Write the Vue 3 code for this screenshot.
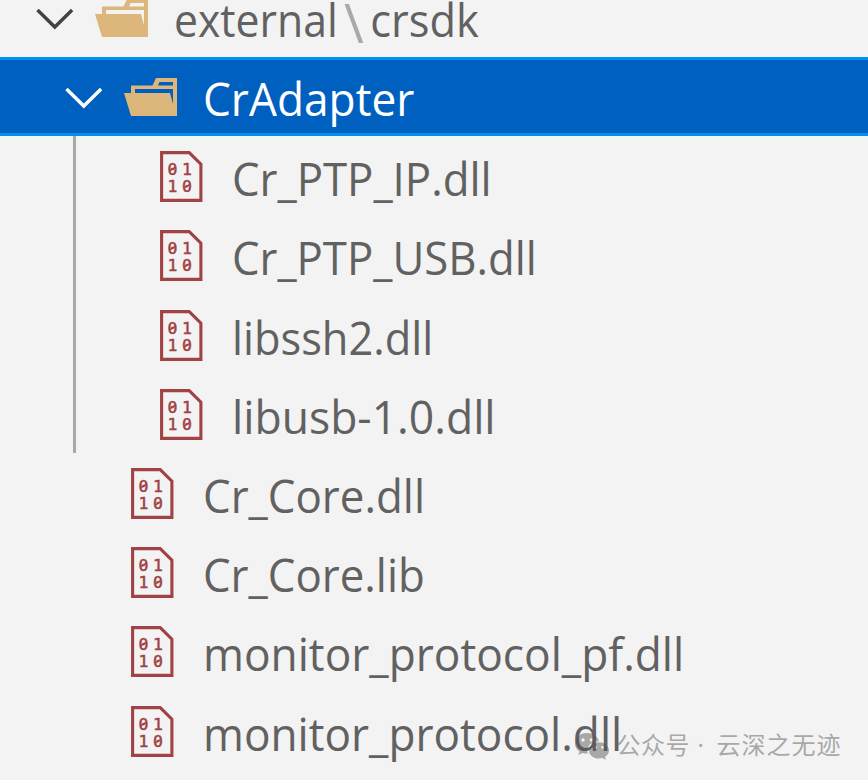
<script setup>
import { ref } from 'vue'

// width: 文件名的排版宽度
const adapterFiles = [
  { name: 'Cr_PTP_IP.dll', width: 259.6 },
  { name: 'Cr_PTP_USB.dll', width: 304.8 },
  { name: 'libssh2.dll', width: 201.2 },
  { name: 'libusb-1.0.dll', width: 263.6 }
]

const sdkFiles = [
  { name: 'Cr_Core.dll', width: 222 },
  { name: 'Cr_Core.lib', width: 221.8 },
  { name: 'monitor_protocol_pf.dll', width: 481.2 },
  { name: 'monitor_protocol.dll', width: 419.2 }
]

const adapterOpen = ref(true)
</script>

<template>
  <div class="explorer">
    <svg class="symbols" width="0" height="0">
      <symbol id="chevron" viewBox="0 0 38 79">
        <path d="M1.5 32 18.8 49 36.1 32" fill="none" stroke="currentColor" stroke-width="3.4" />
      </symbol>
      <symbol id="folder" viewBox="0 0 54 79">
        <path
          fill="#dcb67a"
          fill-rule="evenodd"
          d="M7 28.5H28.5L32 21H53V59H7L0 36H7ZM35.5 25 34 28.5H49V25ZM11 32V36H46L49 47V32Z"
        />
      </symbol>
      <symbol id="binary" viewBox="0 0 44 79">
        <path d="M1.6 16.6H29.2L40.9 28.1V64.4H1.6Z" fill="none" stroke="#a04246" stroke-width="3.1" />
        <text class="bits" x="7.6" y="39.1">01</text>
        <text class="bits" x="7.6" y="56.4">10</text>
        <path d="M10.2 34.6 15.3 31.2M24.5 51.9 29.6 48.5" stroke="#a04246" stroke-width="1.5" />
      </symbol>
    </svg>

    <div class="row root-row">
      <svg class="chevron"><use href="#chevron" /></svg>
      <svg class="folder"><use href="#folder" /></svg>
      <svg class="label" width="320">
        <text y="59.2" textLength="163.8" lengthAdjust="spacingAndGlyphs">external</text>
        <text class="separator" x="170" y="65">\</text>
        <text x="196.2" y="59.2" textLength="108.6" lengthAdjust="spacingAndGlyphs">crsdk</text>
      </svg>
    </div>

    <div class="row selected" @click="adapterOpen = !adapterOpen">
      <svg class="chevron"><use href="#chevron" /></svg>
      <svg class="folder"><use href="#folder" /></svg>
      <svg class="label" width="212">
        <text y="59.2" textLength="211.4" lengthAdjust="spacingAndGlyphs">CrAdapter</text>
      </svg>
    </div>

    <div v-if="adapterOpen" class="children">
      <div v-for="file in adapterFiles" :key="file.name" class="row file-row">
        <svg class="binary"><use href="#binary" /></svg>
        <svg class="label" :width="file.width">
          <text y="59.5" :textLength="file.width" lengthAdjust="spacingAndGlyphs">{{ file.name }}</text>
        </svg>
      </div>
    </div>

    <div class="siblings">
      <div v-for="file in sdkFiles" :key="file.name" class="row file-row">
        <svg class="binary"><use href="#binary" /></svg>
        <svg class="label" :width="file.width">
          <text y="59.5" :textLength="file.width" lengthAdjust="spacingAndGlyphs">{{ file.name }}</text>
        </svg>
      </div>
    </div>

    <div class="watermark">
      <svg class="wechat" viewBox="0 0 35 28">
        <path
          fill-rule="evenodd"
          d="M12 0C5 0 0 4.8 0 10.4c0 3.4 1.8 6.2 4.6 8.1L3.3 22l4.5-2.1c1.3.4 2.7.6 4.2.6h.8C10.7 14 16 8 24 8.2 22.8 3.5 18 0 12 0ZM8 5.3a1.7 1.7 0 1 0 .01 0ZM16.3 5.3a1.7 1.7 0 1 0 .01 0Z"
        />
        <path
          fill-rule="evenodd"
          d="M24 9.2c-5.6 0-10 3.7-10 8.2s4.4 8.2 10 8.2c1.2 0 2.4-.2 3.5-.5l3.3 1.9-.9-3.2c2.5-1.5 4.1-3.8 4.1-6.4 0-4.5-4.4-8.2-10-8.2ZM20.6 13a1.4 1.4 0 1 0 .01 0ZM27.5 13a1.4 1.4 0 1 0 .01 0Z"
        />
      </svg>
      <svg class="watermark-text">
        <text x="-1.5" y="26" textLength="73">公众号</text>
        <text class="dot" x="79.5" y="26">·</text>
        <text x="98.5" y="26" textLength="124">云深之无迹</text>
      </svg>
    </div>
  </div>
</template>

<style>
body {
  background: #f3f3f3;
}
</style>

<style scoped>
.explorer {
  position: relative;
  height: 780px;
  overflow: hidden;
  background: #f3f3f3;
  color: #616161;
}
.symbols {
  display: block;
}
.row {
  display: flex;
  box-sizing: border-box;
  height: 79.2px;
}
.row svg {
  flex: none;
  height: 79px;
}
.root-row {
  margin-top: -22.2px;
  padding-left: 35.5px;
}
.root-row .chevron {
  color: #424242;
}
.selected {
  padding-left: 64.5px;
  background: #0060c0;
  box-shadow: inset 0 3px #0090f1, inset 0 -3px #0090f1;
  color: #fff;
  cursor: pointer;
}
.chevron {
  width: 38px;
  margin-right: 21.5px;
}
.folder {
  width: 54px;
  margin-right: 24.8px;
}
.binary {
  width: 44px;
  margin-right: 27.8px;
}
.children {
  margin-left: 73px;
  padding-left: 84px;
  border-left: 3px solid #a9a9a9;
}
.siblings {
  padding-left: 131px;
}
.row .label {
  overflow: visible;
  fill: currentColor;
  font-family: "Open Sans", "Noto Sans", sans-serif;
  font-size: 46px;
}
.separator {
  fill: #a9a9a9;
  font-size: 54px;
}
.bits {
  fill: #a04246;
  stroke: #a04246;
  stroke-width: 0.5px;
  font-family: "DejaVu Sans Mono", monospace;
  font-size: 16.5px;
  letter-spacing: 4.4px;
}
.watermark {
  position: absolute;
  left: 575px;
  top: 728px;
  display: flex;
  opacity: 0.47;
}
.wechat {
  width: 35px;
  height: 28px;
  margin-top: 4.5px;
  fill: #555;
}
.watermark-text {
  width: 235px;
  height: 36px;
  margin-left: 8px;
  fill: #555;
  font-family: "Noto Sans CJK SC", sans-serif;
  font-size: 24px;
}
.watermark-text .dot {
  font-family: "Noto Sans", sans-serif;
}
</style>
